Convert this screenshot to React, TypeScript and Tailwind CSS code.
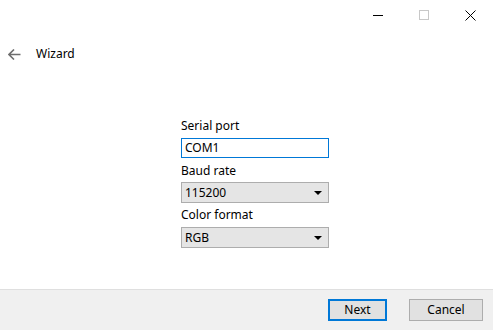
import React from "react";

export default function App() {
  const font = { fontFamily: '"Noto Sans", "Segoe UI", sans-serif' };
  return (
    <div
      className="w-[493px] h-[330px] bg-white flex flex-col text-[12px] text-black overflow-hidden"
      style={font}
    >
      {/* title bar */}
      <div className="h-[30px] flex justify-end shrink-0">
        <div className="w-[46px] h-[30px] flex items-center justify-center">
          <div className="w-[10px] h-[1px] bg-black" />
        </div>
        <div className="w-[46px] h-[30px] flex items-center justify-center">
          <div className="w-[10px] h-[10px] border border-[#c8c8c8]" />
        </div>
        <div className="w-[46px] h-[30px] flex items-center justify-center">
          <svg width="11" height="11" viewBox="0 0 11 11">
            <path d="M0.5 0.5 L10.5 10.5 M10.5 0.5 L0.5 10.5" stroke="#000" strokeWidth="1" />
          </svg>
        </div>
      </div>
      {/* header */}
      <div className="h-[44px] pt-[4px] flex items-center shrink-0">
        <div className="w-[36px] flex items-center pl-[8px]">
          <svg width="13" height="11" viewBox="0 0 13 11">
            <path d="M6 0.5 L1 5.5 L6 10.5 M1 5.5 H12.5" stroke="#6e6e6e" strokeWidth="1.6" fill="none" />
          </svg>
        </div>
        <span>Wizard</span>
      </div>
      {/* content */}
      <div className="flex-1 flex flex-col pl-[181px] pt-[44px]">
        <div className="w-[148px] flex flex-col">
          <div className="h-[16px] leading-[16px]">Serial port</div>
          <div className="mt-[4px] h-[20px] border border-[#0078d7] flex items-center px-[3px] leading-[16px]">
            COM1
          </div>
          <div className="mt-[5px] h-[16px] leading-[16px]">Baud rate</div>
          <div className="mt-[3px] h-[21px] border border-[#adadad] bg-[#e5e5e5] flex items-center justify-between pl-[3px] pr-[6px] leading-[16px]">
            <span>115200</span>
            <svg width="8" height="4" viewBox="0 0 8 4">
              <path d="M0 0 H8 L4 4 Z" fill="#000" />
            </svg>
          </div>
          <div className="mt-[4px] h-[16px] leading-[16px]">Color format</div>
          <div className="mt-[4px] h-[21px] border border-[#adadad] bg-[#e5e5e5] flex items-center justify-between pl-[3px] pr-[6px] leading-[16px]">
            <span>RGB</span>
            <svg width="8" height="4" viewBox="0 0 8 4">
              <path d="M0 0 H8 L4 4 Z" fill="#000" />
            </svg>
          </div>
        </div>
      </div>
      {/* footer */}
      <div className="h-[41px] shrink-0 bg-[#f0f0f0] border-t border-[#dfdfdf] flex items-center justify-end pr-[10px] gap-[22px]">
        <button className="w-[59px] h-[22px] border-2 border-[#0078d7] bg-[#e1e1e1] leading-[16px]">
          Next
        </button>
        <button className="w-[74px] h-[22px] border border-[#adadad] bg-[#e1e1e1] leading-[16px]">
          Cancel
        </button>
      </div>
    </div>
  );
}
